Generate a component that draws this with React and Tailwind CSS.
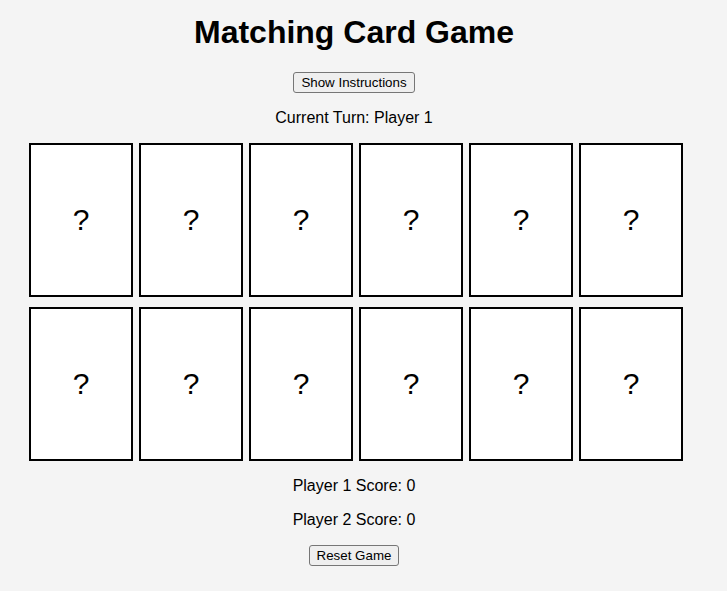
const cards = Array.from({ length: 12 }, (_, i) => i);

function Card() {
  return (
    <div className="w-[104px] h-[154px] border-2 border-black bg-white flex items-center justify-center text-[30px] leading-none">
      ?
    </div>
  );
}

export default function App() {
  return (
    <div className="min-h-[591px] bg-[#f4f4f4] text-black font-['Liberation_Sans',Arial,sans-serif]">
      <div className="w-[708px] flex flex-col items-center text-center">
        <h1 className="mt-[14px] mb-[21px] text-[32px] font-bold leading-[1.149]">Matching Card Game</h1>
        <button className="h-[21px] px-[7px] text-[13.33px] leading-none border border-[#767676] rounded-[3px] bg-[#efefef]">
          Show Instructions
        </button>
        <p className="my-4 text-base leading-[18px]">Current Turn: Player 1</p>
        <div className="pl-[4px] grid grid-cols-[repeat(6,104px)] gap-x-[6px] gap-y-[10px]">
          {cards.map((c) => (
            <Card key={c} />
          ))}
        </div>
        <p className="mt-4 text-base leading-[18px]">Player 1 Score: 0</p>
        <p className="my-4 text-base leading-[18px]">Player 2 Score: 0</p>
        <button className="h-[21px] px-[7px] text-[13.33px] leading-none border border-[#767676] rounded-[3px] bg-[#efefef]">
          Reset Game
        </button>
      </div>
    </div>
  );
}
